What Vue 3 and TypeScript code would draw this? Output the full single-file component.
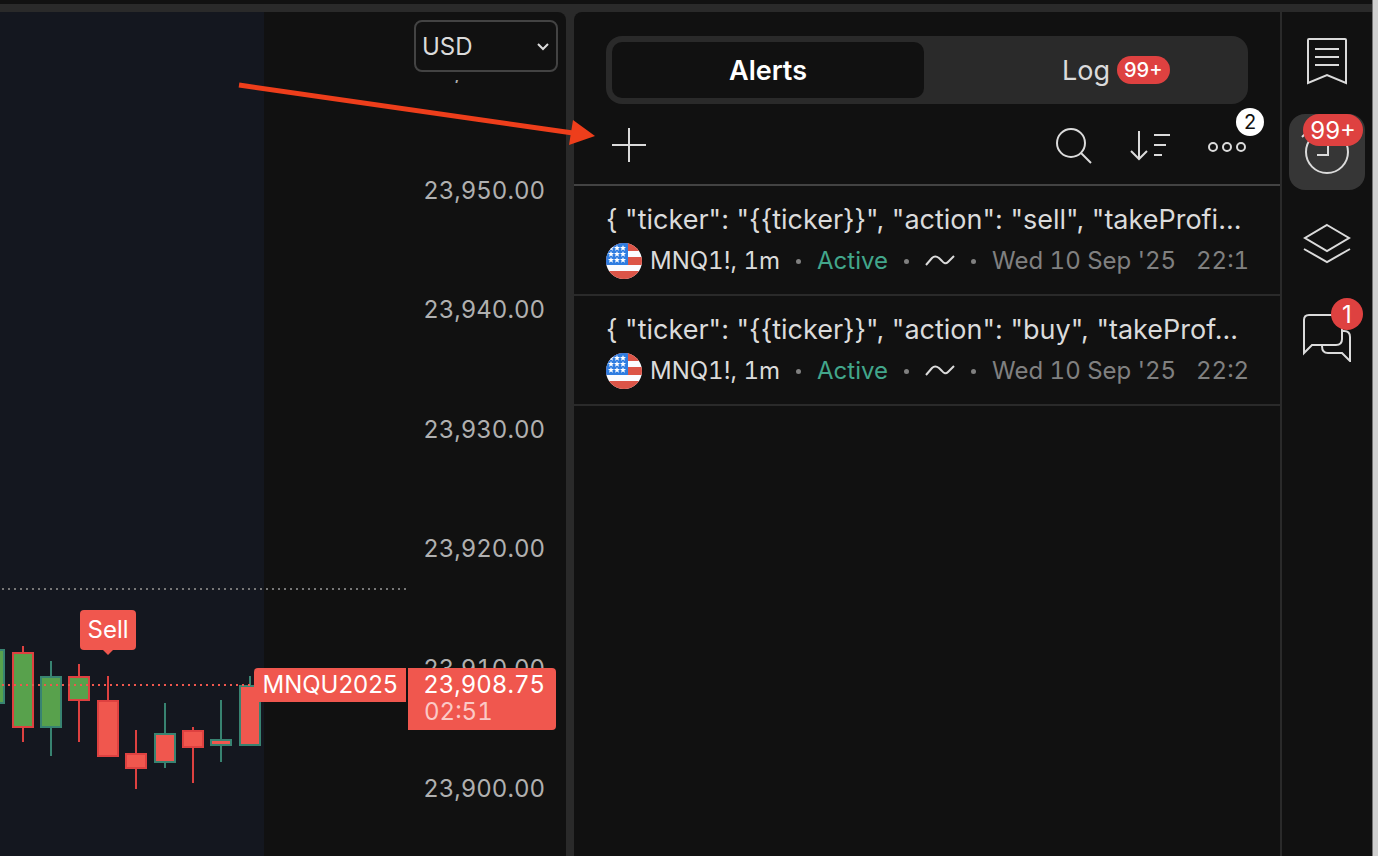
<script setup lang="ts">
import { ref } from 'vue'

interface Candle {
  x: number
  top: number
  bottom: number
  high: number
  low: number
  rising: boolean
  fill: 'green' | 'red'
}

interface AlertItem {
  id: number
  message: string
  symbol: string
  status: string
  date: string
  time: string
}

type TabName = 'alerts' | 'log'

const activeTab = ref<TabName>('alerts')
const currency = ref('USD')

const candles: Candle[] = [
  { x: -17, top: 649, bottom: 704, high: 649, low: 704, rising: true, fill: 'green' },
  { x: 12, top: 652, bottom: 728, high: 646, low: 742, rising: false, fill: 'green' },
  { x: 40, top: 676, bottom: 728, high: 661, low: 756, rising: true, fill: 'green' },
  { x: 68, top: 676, bottom: 701, high: 664, low: 742, rising: false, fill: 'green' },
  { x: 97, top: 700, bottom: 757, high: 676, low: 757, rising: false, fill: 'red' },
  { x: 125, top: 753, bottom: 769, high: 730, low: 789, rising: false, fill: 'red' },
  { x: 154, top: 733, bottom: 763, high: 703, low: 768, rising: true, fill: 'red' },
  { x: 182, top: 730, bottom: 748, high: 727, low: 783, rising: false, fill: 'red' },
  { x: 210, top: 739, bottom: 746, high: 700, low: 762, rising: true, fill: 'red' },
  { x: 239, top: 685, bottom: 746, high: 676, low: 746, rising: true, fill: 'red' },
]

const topPrice = 23960
const priceTicks = Array.from({ length: 7 }, (_, i) => {
  const price = topPrice - i * 10
  return {
    label: price.toLocaleString('en-US', { minimumFractionDigits: 2 }),
    y: Math.round(79 + (i * 598) / 5),
  }
})

const stars = [5, 11, 17].flatMap((y) => [5, 11, 17].map((x) => ({ x, y })))

const alerts: AlertItem[] = [
  {
    id: 1,
    message: '{ "ticker": "{{ticker}}", "action": "sell", "takeProfi...',
    symbol: 'MNQ1!, 1m',
    status: 'Active',
    date: "Wed 10 Sep '25",
    time: '22:1',
  },
  {
    id: 2,
    message: '{ "ticker": "{{ticker}}", "action": "buy", "takeProf...',
    symbol: 'MNQ1!, 1m',
    status: 'Active',
    date: "Wed 10 Sep '25",
    time: '22:2',
  },
]
</script>

<template>
  <div class="app">
    <div class="top-band"></div>
    <div class="workspace">
      <main class="chart">
        <svg class="plot" width="566" height="844" viewBox="0 12 566 844" role="img" aria-label="MNQU2025 price chart">
          <g v-for="c in candles" :key="c.x" :class="c.rising ? 'rising' : 'falling'">
            <rect class="wick" :x="c.x + 10" :y="c.high" width="2" :height="c.low - c.high" />
            <rect
              class="body"
              :class="c.fill"
              :x="c.x + 1"
              :y="c.top + 1"
              width="20"
              :height="c.bottom - c.top - 2"
            />
          </g>

          <path class="level" d="M2 589H407" />
          <path class="level last" d="M2 685H254" />

          <rect class="tag" x="80" y="610" width="56" height="40" rx="4" />
          <path class="tag" d="M102 649H114L108 655Z" />
          <text class="on-tag" x="108" y="638" text-anchor="middle">Sell</text>

          <text v-for="t in priceTicks" :key="t.label" class="tick" x="545" :y="t.y" text-anchor="end">{{ t.label }}</text>

          <path class="tag" d="M406 668V702H254V672Q254 668 258 668Z" />
          <text class="on-tag" x="330" y="693" text-anchor="middle">MNQU2025</text>
          <path class="tag" d="M408 668H552Q556 668 556 672V726Q556 730 552 730H408Z" />
          <text class="on-tag price" x="545" y="693" text-anchor="end">23,908.75</text>
          <text class="countdown" x="424" y="720">02:51</text>
        </svg>
        <div class="currency">
          <select v-model="currency" aria-label="Currency">
            <option>USD</option>
            <option>EUR</option>
            <option>GBP</option>
          </select>
          <svg class="chevron" width="12" height="8" viewBox="0 0 12 8" aria-hidden="true">
            <path d="M1 1L6 6L11 1" />
          </svg>
        </div>
      </main>

      <section class="panel" aria-label="Alerts">
        <div class="tabs" role="tablist">
          <button
            type="button"
            role="tab"
            class="tab"
            :class="{ active: activeTab === 'alerts' }"
            :aria-selected="activeTab === 'alerts'"
            @click="activeTab = 'alerts'"
          >
            Alerts
          </button>
          <button
            type="button"
            role="tab"
            class="tab"
            :class="{ active: activeTab === 'log' }"
            :aria-selected="activeTab === 'log'"
            @click="activeTab = 'log'"
          >
            <span class="tab-label">Log<span class="log-badge">99+</span></span>
          </button>
        </div>

        <div class="toolbar">
          <button type="button" class="tool" aria-label="Create alert">
            <svg width="34" height="36" viewBox="0 0 34 36"><path d="M17 0V34M0 17H34" /></svg>
          </button>
          <span class="spacer"></span>
          <button type="button" class="tool" aria-label="Search">
            <svg width="36" height="36" viewBox="0 0 36 36">
              <circle cx="15" cy="15" r="14" />
              <path d="M25 25L35 35" />
            </svg>
          </button>
          <button type="button" class="tool" aria-label="Sort">
            <svg width="40" height="36" viewBox="0 0 40 36">
              <path d="M9 3V31M1 23L9 31L17 23M24 7H40M24 17H36M24 27H32" />
            </svg>
          </button>
          <button type="button" class="tool" aria-label="More">
            <svg width="38" height="36" viewBox="0 0 38 36">
              <circle cx="5" cy="19" r="4" />
              <circle cx="19" cy="19" r="4" />
              <circle cx="33" cy="19" r="4" />
            </svg>
            <span class="more-badge">2</span>
          </button>
        </div>

        <ul class="alert-list">
          <li v-for="item in alerts" :key="item.id" class="alert">
            <div class="message">{{ item.message }}</div>
            <div class="meta">
              <svg class="flag" width="36" height="36" viewBox="0 0 36 36" aria-hidden="true">
                <rect width="36" height="36" fill="#fbfcff" />
                <path d="M0 0H36V8H0ZM0 14H36V22H0ZM0 28H36V36H0Z" fill="#dc5548" />
                <rect width="22" height="22" fill="#2f7de1" />
                <path
                  v-for="s in stars"
                  :key="`${s.x}-${s.y}`"
                  :transform="`translate(${s.x} ${s.y})`"
                  d="M0 -3L.8 -1H3L1.3 .5L2 2.7L0 1.4L-2 2.7L-1.3 .5L-3 -1H-.8Z"
                  fill="#fff"
                />
              </svg>
              <span class="symbol">{{ item.symbol }}</span>
              <span class="dot"></span>
              <span class="status">{{ item.status }}</span>
              <span class="dot"></span>
              <svg class="wave" width="30" height="12" viewBox="0 0 30 12" aria-hidden="true">
                <path d="M1 10L7 3Q10 0 14 3L17 6Q20 10 23 7L29 1" />
              </svg>
              <span class="dot"></span>
              <span class="date">{{ item.date }}</span>
              <span class="time">{{ item.time }}</span>
            </div>
          </li>
        </ul>
      </section>

      <nav class="rail" aria-label="Widgets">
        <button type="button" class="rail-button" aria-label="Watchlist">
          <svg width="52" height="52" viewBox="0 0 52 52">
            <path d="M7 49V6Q7 5 8 5H44Q45 5 45 6V49L26 41ZM14 15H38M14 23H38M14 31H38" />
          </svg>
        </button>
        <button type="button" class="rail-button selected" aria-label="Alerts">
          <svg width="52" height="52" viewBox="0 0 52 52">
            <circle cx="26" cy="26" r="21" />
            <path d="M27 16V29H16M1 11L8 4M51 11L44 4" />
          </svg>
          <span class="rail-badge">99+</span>
        </button>
        <button type="button" class="rail-button" aria-label="Object tree">
          <svg width="52" height="52" viewBox="0 0 52 52">
            <path d="M26 7L48 20L26 33L4 20ZM3 31L26 44L49 31" />
          </svg>
        </button>
        <button type="button" class="rail-button" aria-label="Chats">
          <svg width="52" height="52" viewBox="0 0 52 52">
            <path d="M3 43V10Q3 5 8 5H36Q41 5 41 10V29Q41 35 35 35H11Z" />
            <path d="M41 21H43Q49 21 49 27V51L41 43H27Q21 43 21 36" />
          </svg>
          <span class="rail-badge">1</span>
        </button>
      </nav>

      <svg class="pointer" width="360" height="64" viewBox="0 0 360 64" aria-hidden="true">
        <path d="M2 3L336 51" class="shaft" />
        <path d="M336 38L358 54L332 63Z" class="head" />
      </svg>
    </div>
    <div class="edge"></div>
  </div>
</template>

<style>
body {
  margin: 0;
  background: #2a2a2a;
}
</style>

<style scoped>
.app {
  display: grid;
  grid-template-columns: 1fr 6px;
  grid-template-rows: 12px 1fr;
  min-height: 100vh;
  box-sizing: border-box;
  background: #2a2a2a;
  color: #dbdbdb;
  font-family: Inter, "Liberation Sans", sans-serif;
  font-size: 24px;
}

.top-band {
  box-sizing: border-box;
  border-top: 4px solid #111;
}

.workspace {
  grid-row: 2;
  position: relative;
  display: flex;
  min-width: 0;
}

.edge {
  grid-column: 2;
  grid-row: 1 / 3;
  background: #cfcfcf;
  border-left: 1px solid #777;
}

button {
  margin: 0;
  padding: 0;
  border: 0;
  background: none;
  color: inherit;
  font: inherit;
  cursor: pointer;
}

/* Chart */
.chart {
  position: relative;
  flex: 1;
  min-width: 0;
  display: flex;
  justify-content: flex-end;
  overflow: hidden;
  margin-right: 8px;
  border-top-right-radius: 8px;
  background: linear-gradient(to left, #111 302px, #14171f 302px);
}

.plot {
  flex: none;
  display: block;
}

.rising .wick {
  fill: #388371;
}

.falling .wick {
  fill: #de4140;
}

.body {
  stroke-width: 2;
}

.rising .body {
  stroke: #388371;
}

.falling .body {
  stroke: #de4140;
}

.green {
  fill: #58a14c;
}

.red {
  fill: #f0574e;
}

.level {
  stroke: #777;
  stroke-width: 2;
  stroke-dasharray: 2 4;
}

.level.last {
  stroke: #f0574e;
}

.tag {
  fill: #f0574e;
}

.on-tag {
  fill: #fff;
}

.tick {
  fill: #b0b0b0;
}

.tick,
.price,
.countdown,
.meta {
  font-variant-numeric: tabular-nums;
}

.countdown {
  fill: #fbc9c6;
}

.currency {
  position: absolute;
  top: 8px;
  right: 8px;
  width: 144px;
  padding-bottom: 8px;
  background: #111;
}

.currency select {
  display: block;
  width: 100%;
  height: 52px;
  padding: 0 6px;
  border: 2px solid #434343;
  border-radius: 8px;
  appearance: none;
  background: #111;
  color: #dbdbdb;
  font: inherit;
}

.chevron {
  position: absolute;
  top: 23px;
  right: 9px;
  fill: none;
  stroke: #dbdbdb;
  stroke-width: 2;
  pointer-events: none;
}

/* Alerts panel */
.panel {
  flex: none;
  width: 706px;
  border-top-left-radius: 8px;
  background: #111;
}

.tabs {
  display: grid;
  grid-template-columns: 1fr 1fr;
  gap: 6px;
  margin: 24px 32px 0;
  padding: 6px;
  border-radius: 16px;
  background: #2a2a2a;
}

.tab {
  height: 56px;
  border-radius: 10px;
  font-size: 27px;
}

.tab.active {
  background: #111;
  color: #fff;
  font-weight: 600;
}

.tab-label {
  position: relative;
}

.log-badge {
  position: absolute;
  top: 2px;
  left: 100%;
  box-sizing: border-box;
  height: 28px;
  margin-left: 7px;
  padding: 0 7px;
  border-radius: 14px;
  background: #de4140;
  color: #fff;
  font-size: 20px;
  font-weight: 500;
  line-height: 28px;
}

.toolbar {
  display: flex;
  align-items: center;
  gap: 38px;
  height: 76px;
  padding: 4px 34px 0 38px;
  border-bottom: 2px solid #434343;
}

.spacer {
  flex: 1;
}

.tool {
  position: relative;
  display: flex;
}

.tool svg,
.rail-button svg {
  fill: none;
  stroke: #dbdbdb;
  stroke-width: 2;
}

.more-badge {
  position: absolute;
  top: -20px;
  right: -18px;
  width: 28px;
  height: 28px;
  border-radius: 50%;
  background: #fff;
  color: #111;
  font-size: 20px;
  line-height: 28px;
  text-align: center;
}

.alert-list {
  margin: 0;
  padding: 0;
  list-style: none;
}

.alert {
  padding: 16px 32px 15px;
  border-bottom: 2px solid #2a2a2a;
}

.message {
  overflow: hidden;
  margin-bottom: 5px;
  font-size: 27px;
  line-height: 36px;
  white-space: nowrap;
}

.meta {
  display: flex;
  align-items: center;
  overflow: hidden;
  line-height: 36px;
  white-space: nowrap;
}

.flag {
  flex: none;
  margin-right: 8px;
  border-radius: 50%;
}

.dot {
  flex: none;
  width: 5px;
  height: 5px;
  margin: 0 16px;
  border-radius: 50%;
  background: #808080;
}

.status {
  color: #42a68b;
}

.wave {
  flex: none;
  fill: none;
  stroke: #dbdbdb;
  stroke-width: 2;
}

.date,
.time {
  color: #808080;
}

.time {
  margin-left: 20px;
}

/* Right rail */
.rail {
  flex: none;
  display: flex;
  flex-direction: column;
  align-items: center;
  gap: 16px;
  width: 90px;
  padding-top: 10px;
  border-left: 2px solid #2a2a2a;
  box-sizing: border-box;
  width: 92px;
  background: #111;
}

.rail-button {
  position: relative;
  display: flex;
  align-items: center;
  justify-content: center;
  width: 76px;
  height: 76px;
  border-radius: 16px;
}

.rail-button.selected {
  background: #363636;
}

.rail-badge {
  position: absolute;
  top: 0;
  right: 2px;
  box-sizing: border-box;
  min-width: 32px;
  height: 32px;
  padding: 0 7px;
  border-radius: 16px;
  background: #de4140;
  color: #fff;
  line-height: 34px;
  text-align: center;
}

/* Callout arrow over the chart and the panel */
.pointer {
  position: absolute;
  top: 70px;
  right: 775px;
  pointer-events: none;
}

.shaft {
  stroke: #ee3e1b;
  stroke-width: 5;
}

.head {
  fill: #ee3e1b;
}
</style>
